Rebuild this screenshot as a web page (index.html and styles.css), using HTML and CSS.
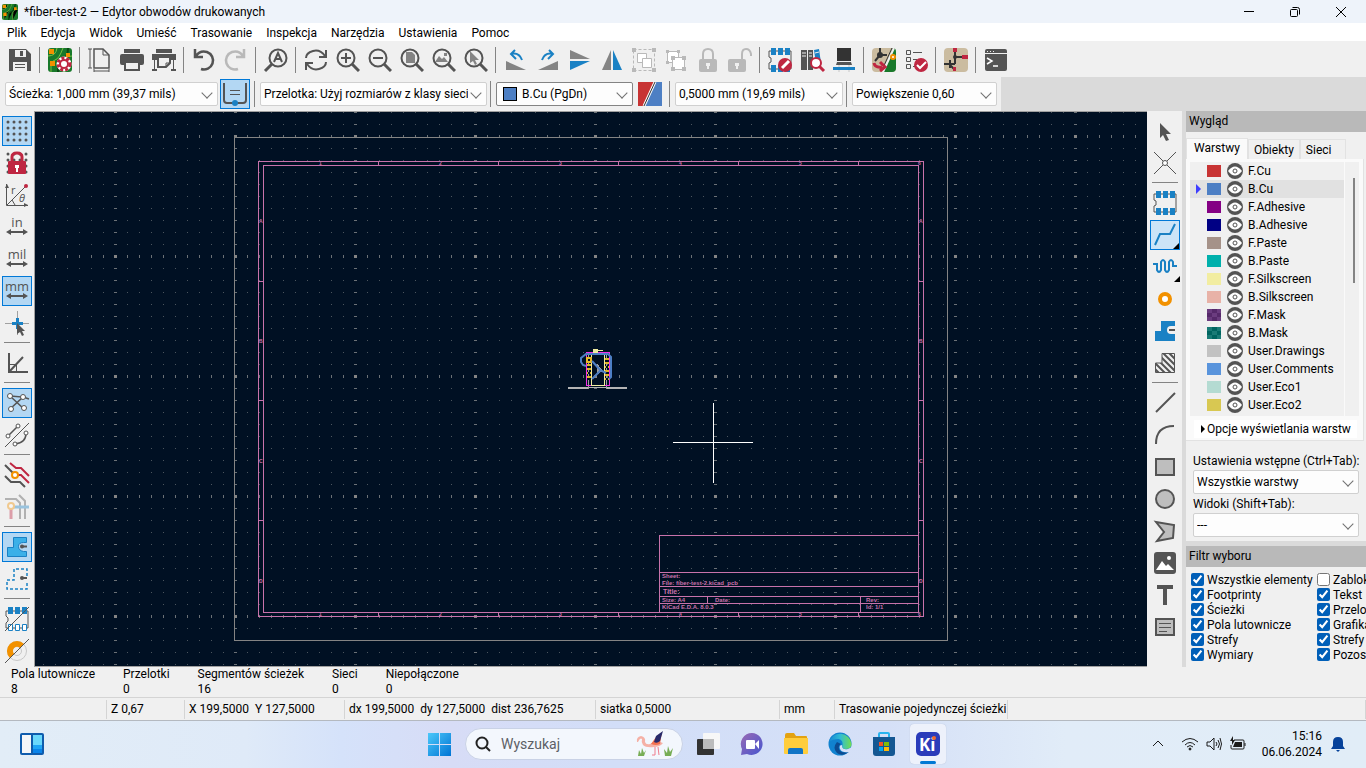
FILE: index.html
```html
<!DOCTYPE html>
<html lang="pl">
<head>
  <meta charset="UTF-8">
  <title>*fiber-test-2 — Edytor obwodów drukowanych</title>
  <meta name="viewport" content="width=device-width, initial-scale=1.0">
  <link rel="stylesheet" href="styles.css">
</head>
<body>
  <!-- shared symbols -->
  <svg class="defs" aria-hidden="true">
    <symbol id="lens" viewBox="0 0 24 24">
      <circle cx="10" cy="10" r="8.500"/><path d="M16 16l7 7" stroke-width="3"/>
    </symbol>
    <symbol id="footprint" viewBox="0 0 24 24">
      <path d="M1 3h22v18H1v-6l2-1v-4L1 9z" stroke-width="1"/>
      <path class="blue" d="M3 0h5v7H3zM10 0h5v7h-5zM17 0h5v7h-5zM3 17h5v7H3zM10 17h5v7h-5zM17 17h5v7h-5z"/>
    </symbol>
    <symbol id="eye" viewBox="0 0 16 16">
      <circle cx="8" cy="8" r="8" fill="#545454"/>
      <path d="M1 8q7-9 14 0q-7 9-14 0z" fill="#fff"/>
      <circle cx="8" cy="8" r="2" fill="#fff" stroke="#545454" stroke-width="1"/>
    </symbol>
    <symbol id="arrow" viewBox="0 0 24 24">
      <path class="dark" d="M7 4v15l3-3 3 6 3-1-3-6h5z"/>
    </symbol>
    <symbol id="kicad-board" viewBox="0 0 24 24">
      <rect class="green" width="24" height="24" rx="3"/>
      <path d="M0 8q8 0 9-8M3 24v-7q0-4 4-5t8-12M24 8q-8 0-8 8v8" stroke="#7bc043" stroke-width="1"/>
      <path d="M10 24v-8q0-3 5-5t5-11" stroke="#0d4b16" stroke-width="2"/>
      <path class="orange" d="M1 1h5v5H1zM2 13h5v5H2zM18 5h4v4h-4z"/>
    </symbol>
  </svg>

  <header class="titlebar">
    <svg class="app-icon"><use href="#kicad-board"/></svg>
    <span class="title">*fiber-test-2 — Edytor obwodów drukowanych</span>
    <button aria-label="Minimalizuj"><svg viewBox="0 0 12 12"><path d="M1 5.500h10"/></svg></button>
    <button aria-label="Przywróć"><svg viewBox="0 0 12 12"><rect x="1.500" y="3.500" width="7" height="7" rx="1"/><path d="M3.500 1.500h5q2 0 2 2v5"/></svg></button>
    <button aria-label="Zamknij"><svg viewBox="0 0 12 12"><path d="M1 1l10 10M11 1L1 11"/></svg></button>
  </header>

  <nav class="menubar">
    <button>Plik</button><button>Edycja</button><button>Widok</button><button>Umieść</button><button>Trasowanie</button><button>Inspekcja</button><button>Narzędzia</button><button>Ustawienia</button><button>Pomoc</button>
  </nav>

  <div class="toolbar">
    <button class="tool" aria-label="Zapisz"><svg viewBox="0 0 24 24"><path class="dark" d="M1 1h17l5 5v17H1z"/><path class="bg" d="M7 2h11v7H7zM5 14h14v9H5z"/><path class="dark" d="M12 3h3v5h-3zM7 16h10v1H7zM7 19h10v1H7z"/></svg></button>
    <i class="sep"></i>
    <button class="tool" aria-label="Ustawienia płytki"><svg viewBox="0 0 24 24"><use href="#kicad-board"/><circle cx="16" cy="16" r="5" stroke="#fff" stroke-width="5"/><circle cx="16" cy="16" r="6" stroke="#bf2641" stroke-width="3" stroke-dasharray="3 2"/><circle cx="16" cy="16" r="4" fill="#fff" stroke="#bf2641"/></svg></button>
    <i class="sep"></i>
    <button class="tool" aria-label="Ustawienia strony"><svg viewBox="0 0 24 24"><path d="M6 1h9l6 6v13H6z" stroke-width="1.500"/><path d="M15 1v6h6M2 1v19M0 1h4M0 20h4M6 23h15M6 21v3M21 21v3" stroke-width="1"/></svg></button>
    <button class="tool" aria-label="Drukuj"><svg viewBox="0 0 24 24"><path class="dark" d="M4 1h16v4H4zM0 8q0-2 2-2h20q2 0 2 2v7q0 2-2 2h-2v-4H4v4H2q-2 0-2-2z"/><path d="M5 14h14v8H5z" fill="#f0f0f0"/></svg></button>
    <button class="tool" aria-label="Rysuj"><svg viewBox="0 0 24 24"><path class="dark" d="M4 1h16v4H4zM0 6h24v6H0zM2 12h1v9H2zM21 12h1v9h-1zM0 21h5v2H0zM19 21h5v2h-5z"/><path d="M6 9h12v6l-4 4H6z" fill="#f0f0f0"/><path d="M14 19v-4h4" stroke-width="1"/></svg></button>
    <i class="sep"></i>
    <button class="tool" aria-label="Cofnij"><svg viewBox="0 0 24 24"><path d="M3 1v8h8M4 8q4-6 11-4a8.500 8.500 0 1 1-6 17" stroke-width="2.500"/></svg></button>
    <button class="tool" aria-label="Ponów" disabled><svg viewBox="0 0 24 24"><path d="M20 1v8h-8M19 8q-4-6-11-4a8.500 8.500 0 1 0 6 17" stroke="#b9b9b9" stroke-width="2.500"/></svg></button>
    <i class="sep"></i>
    <button class="tool" aria-label="Znajdź"><svg viewBox="0 0 24 24"><circle cx="14" cy="10" r="8.500"/><path d="M8 16l-7 7" stroke-width="3"/><path d="M10 14l4-9 4 9M11 11h6"/></svg></button>
    <i class="sep"></i>
    <button class="tool" aria-label="Odśwież"><svg viewBox="0 0 24 24"><path d="M22 2v7h-7M21 8Q16 1 9 3T2 10M2 22v-7h7M3 16q5 7 12 5t7-7"/></svg></button>
    <button class="tool" aria-label="Powiększ"><svg viewBox="0 0 24 24"><use href="#lens"/><path d="M10 5v10M5 10h10"/></svg></button>
    <button class="tool" aria-label="Pomniejsz"><svg viewBox="0 0 24 24"><use href="#lens"/><path d="M5 10h10"/></svg></button>
    <button class="tool" aria-label="Dopasuj stronę"><svg viewBox="0 0 24 24"><use href="#lens"/><path class="gray" d="M6 4h6l3 3v8H6z"/></svg></button>
    <button class="tool" aria-label="Dopasuj obiekty"><svg viewBox="0 0 24 24"><use href="#lens"/><path class="gray" d="M3 14l4-6 3 3 2-2 4 5zM12 5h3v3h-3z"/></svg></button>
    <button class="tool" aria-label="Powiększ zaznaczenie"><svg viewBox="0 0 24 24"><use href="#lens"/><path class="gray" d="M6 3v12l3-2 2 4 2-1-2-4h4z"/></svg></button>
    <i class="sep"></i>
    <button class="tool" aria-label="Obróć w lewo"><svg viewBox="0 0 24 24"><path class="gray" d="M2 13l20 9H2z"/><path class="blue-line" d="M11 2L7 6l5 5M7 6q8-2 11 6"/></svg></button>
    <button class="tool" aria-label="Obróć w prawo"><svg viewBox="0 0 24 24"><path class="gray" d="M22 13L2 22h20z"/><path class="blue-line" d="M13 2l4 4-5 5M17 6Q9 4 6 12"/></svg></button>
    <button class="tool" aria-label="Odbij w pionie"><svg viewBox="0 0 24 24"><path class="gray" d="M2 2l20 9H2z"/><path class="blue" d="M2 22l20-9H2z"/></svg></button>
    <button class="tool" aria-label="Odbij w poziomie"><svg viewBox="0 0 24 24"><path class="gray" d="M2 22l9-20v20z"/><path class="blue" d="M22 22L13 2v20z"/></svg></button>
    <button class="tool" aria-label="Grupuj" disabled><svg viewBox="0 0 24 24"><g class="off"><path d="M1.500 1.500h21v21h-21z" stroke-dasharray="3 2"/><path d="M5.500 5.500h9v9h-9z" fill="#fff"/><path d="M10.500 10.500h9v9h-9z" fill="#fff"/></g><path class="light" d="M0 0h4v4H0zM20 0h4v4h-4zM0 20h4v4H0zM20 20h4v4h-4z"/></svg></button>
    <button class="tool" aria-label="Rozgrupuj" disabled><svg viewBox="0 0 24 24"><g class="off"><path d="M3.500 3.500h11v11h-11z" fill="#fff"/><path d="M8.500 9.500h12v12h-12z" fill="#fff"/></g><path class="light" d="M2 2h3v3H2zM13 2h3v3h-3zM2 13h3v3H2zM7 8h4v4H7zM18 8h4v4h-4zM7 19h4v4H7zM18 19h4v4h-4z"/></svg></button>
    <button class="tool" aria-label="Zablokuj" disabled><svg viewBox="0 0 24 24"><rect class="light" x="3" y="11" width="18" height="13" rx="2"/><path d="M7 11V6q0-5 5-5t5 5v5" stroke="#b9b9b9"/><path class="bg" d="M10 15h4v3h-1v3h-2v-3h-1z"/></svg></button>
    <button class="tool" aria-label="Odblokuj" disabled><svg viewBox="0 0 24 24"><rect class="light" x="0" y="11" width="18" height="13" rx="2"/><path d="M14 11V6q0-5 4-5t5 5v2" stroke="#b9b9b9"/><path class="bg" d="M7 15h4v3h-1v3H8v-3H7z"/></svg></button>
    <i class="sep"></i>
    <button class="tool" aria-label="Edytor footprintów"><svg viewBox="0 0 24 24"><use href="#footprint"/><circle class="red" cx="17" cy="17" r="7"/><path d="M14 20l7-7" stroke="#fff" stroke-width="3"/></svg></button>
    <button class="tool" aria-label="Przeglądarka footprintów"><svg viewBox="0 0 24 24"><path class="dark" d="M1 2h6v20H1zM8 2h5v20H8z"/><path class="blue" d="M14 2l5-1 2 14-5 1z"/><path d="M2 5h4M2 8h4M9 5h3M9 8h3M15 5l4-1" stroke="#f0f0f0" stroke-width="1"/><circle cx="16" cy="15" r="5" fill="#fff" stroke="#bf2641"/><path d="M19 18l5 5" stroke="#bf2641" stroke-width="3"/></svg></button>
    <button class="tool" aria-label="Przeglądarka 3D"><svg viewBox="0 0 24 24"><path d="M7 17v7M17 17v7" stroke="#c8c8c8" stroke-width="1"/><path fill="#333" stroke="none" d="M5 0h14v13H5z"/><path class="dark" d="M5 14h14l1 3H4z"/><path class="blue" d="M1 19h22v3H1z"/></svg></button>
    <i class="sep"></i>
    <button class="tool" aria-label="Aktualizuj ze schematu"><svg viewBox="0 0 24 24"><rect fill="#cbbca0" stroke="none" width="24" height="24" rx="4"/><path class="green" d="M24 4v16q0 4-4 4h-9L21 0q3 0 3 4z"/><path d="M8 0v7M8 7l-5 6M8 7h7" stroke="#333"/><circle cx="8" cy="7" r="3" fill="#333" stroke="none"/><path d="M22 0L11 24" stroke="#f0f0f0" stroke-width="2"/><path d="M20 0L10 22" stroke="#333" stroke-width="1"/><circle cx="21" cy="9" r="2" fill="#fff" stroke="#f29100"/><path d="M2 15q1 5 8 4M8 14l5 5-5 4" stroke="#bf2641" stroke-width="3"/></svg></button>
    <button class="tool" aria-label="Kontrola DRC"><svg viewBox="0 0 24 24"><path d="M2.500 2.500h4v4h-4zM2.500 9.500h4v4h-4zM2.500 16.500h4v4h-4zM9 4.500h9M9 11.500h4M9 18.500h2" stroke-width="1"/><circle class="red" cx="17" cy="17" r="7"/><path d="M13 17l3 3 6-6" stroke="#fff"/></svg></button>
    <i class="sep"></i>
    <button class="tool" aria-label="Edytor schematów"><svg viewBox="0 0 24 24"><rect fill="#cbbca0" stroke="none" width="24" height="24" rx="4"/><path d="M11 3v6M11 9h8M11 9v7M0 16h11M6 12v8M6 17l5 5" stroke="#333"/><circle cx="11" cy="9" r="2" fill="#333" stroke="none"/><path class="red" d="M9 0h4v4H9zM18 7h6v4h-6zM9 19h3v4H9z"/></svg></button>
    <i class="sep"></i>
    <button class="tool" aria-label="Konsola"><svg viewBox="0 0 24 24"><rect class="dark" x="1" y="1" width="22" height="22" rx="2"/><path d="M1 5.500h22M3 3.500h1M6 3.500h1M9 3.500h1" stroke="#f0f0f0" stroke-width="1"/><path d="M3 10l5 3-5 3M9 18h5" stroke="#fff" stroke-width="1.500"/></svg></button>
  </div>

  <div class="toolbar-row">
    <div class="options-bar">
      <span class="select w-track"><select aria-label="Szerokość ścieżki"><option>Ścieżka: 1,000 mm (39,37 mils)</option></select></span>
      <button class="tool on" aria-label="Użyj szerokości ścieżki"><svg viewBox="0 0 24 24"><path d="M1 1v17q0 3 3 3h16q3 0 3-3V1"/><path d="M7 8.500h10M7 12.500h10" stroke-width="1"/><circle class="blue" cx="12" cy="21" r="3"/></svg></button>
      <i class="sep"></i>
      <span class="select w-via"><select aria-label="Przelotka"><option>Przelotka: Użyj rozmiarów z klasy sieci</option></select></span>
      <i class="sep"></i>
      <span class="select w-layer"><i class="chip"></i><select aria-label="Warstwa"><option>B.Cu (PgDn)</option></select></span>
      <button class="tool" aria-label="Para warstw"><svg viewBox="0 0 24 24"><path fill="#c83434" stroke="none" d="M0 0h24v24H0z"/><path fill="#4d7fc4" stroke="none" d="M17 0h7v24H6z"/><path d="M17 0L6 24" stroke="#fff" stroke-width="3"/><path d="M17 0L6 24" stroke="#333" stroke-width="1"/></svg></button>
      <i class="sep"></i>
      <span class="select w-grid"><select aria-label="Siatka"><option>0,5000 mm (19,69 mils)</option></select></span>
      <i class="sep"></i>
      <span class="select w-zoom"><select aria-label="Powiększenie"><option>Powiększenie 0,60</option></select></span>
    </div>
  </div>

  <main class="workspace">
    <div class="side-tools">
      <button class="tool on" aria-label="Siatka"><svg viewBox="0 0 24 24"><path class="dots" d="M3 3h19M3 9h19M3 15h19M3 21h19"/></svg></button>
      <button class="tool" aria-label="Blokada siatki"><svg viewBox="0 0 24 24"><path class="dots" d="M3 3h19M3 9h19M3 15h19M3 21h19"/><rect class="red" x="3" y="10" width="18" height="13" rx="1"/><path d="M7 10V6q0-4 5-4t5 4v4" stroke="#bf2641" stroke-width="3"/><path d="M10 14h4v3h-1v4h-2v-4h-1z" fill="#fff" stroke="none"/></svg></button>
      <button class="tool" aria-label="Współrzędne biegunowe"><svg viewBox="0 0 24 24"><path d="M1.500 1v21.500H23M2 22L21 3M7 17l3 5" stroke-width="1"/><path class="dark" d="M0 5l2-4 2 4zM19 20l4 2-4 2z"/><circle class="red" cx="21" cy="3" r="2"/><text x="6" y="11" class="glyph">r</text><text x="14" y="19" class="glyph theta">θ</text></svg></button>
      <button class="tool" aria-label="Cale"><svg viewBox="0 0 24 24"><text x="12" y="12" class="glyph unit">in</text><path d="M4 17h16"/><path class="dark" d="M6 14v6l-5-3zM18 14v6l5-3z"/></svg></button>
      <button class="tool" aria-label="Milsy"><svg viewBox="0 0 24 24"><text x="12" y="12" class="glyph unit">mil</text><path d="M4 17h16"/><path class="dark" d="M6 14v6l-5-3zM18 14v6l5-3z"/></svg></button>
      <button class="tool on" aria-label="Milimetry"><svg viewBox="0 0 24 24"><text x="12" y="12" class="glyph unit">mm</text><path d="M4 17h16"/><path class="dark" d="M6 14v6l-5-3zM18 14v6l5-3z"/></svg></button>
      <button class="tool" aria-label="Kursor"><svg viewBox="0 0 24 24"><path d="M0 12.500h24M12.500 0v24" stroke="#a0a0a0" stroke-width="1"/><path class="blue" d="M7 11h4V7h3v4h4v3h-4v4h-3v-4H7z"/><path class="dark" d="M12 12v11l3-2 2 4 2-1-2-4h3z"/></svg></button>
      <i class="sep"></i>
      <button class="tool" aria-label="Tryb kąta"><svg viewBox="0 0 24 24"><path d="M4 2v19h19M4 21L18 6"/><path d="M4 13.500h7.500V21" stroke-width="1"/></svg></button>
      <i class="sep"></i>
      <button class="tool on" aria-label="Linie połączeń"><svg viewBox="0 0 24 24"><path d="M5 5l14 13M5 18L18 6 5 5M18 6l6 2" stroke-width="1.500"/><g fill="#fff" stroke-width="1"><circle cx="5" cy="5" r="2.500"/><circle cx="18" cy="6" r="2.500"/><circle cx="6" cy="18" r="2.500"/><circle cx="19" cy="17" r="2.500"/></g></svg></button>
      <button class="tool" aria-label="Linie krzywe"><svg viewBox="0 0 24 24"><path d="M0 24L24 0" stroke-width="1"/><path d="M3 13L13 3M10 21q11-1 11-11" stroke-width="1.500"/><g fill="#fff" stroke-width="1"><circle cx="3" cy="13" r="2"/><circle cx="13" cy="3" r="2"/><circle cx="10" cy="21" r="2"/><circle cx="21" cy="10" r="2"/></g></svg></button>
      <i class="sep"></i>
      <button class="tool" aria-label="Podświetlanie sieci"><svg viewBox="0 0 24 24"><path d="M0 2l10 10M0 13l6 6h9l5 5"/><path d="M5 0l6 5h5l8 8M11 12h5l8 8" stroke="#bf2641"/><circle cx="10" cy="12" r="3" fill="#fff" stroke="#f29100"/></svg></button>
      <button class="tool" aria-label="Widok warstw"><svg viewBox="0 0 24 24" opacity=".4"><path d="M0 4h11l4 4v16M14 0l6 6v18" stroke-width="2"/><path d="M7 12h17" stroke="#1a81c4" stroke-width="3"/><path d="M6 13v11" stroke="#bf2641" stroke-width="3"/><circle cx="6" cy="11" r="3" fill="#fff" stroke="#f29100"/></svg></button>
      <i class="sep"></i>
      <button class="tool on" aria-label="Wypełnione strefy"><svg viewBox="0 0 24 24"><path d="M8.500 2.500h13v5h-3q-5 0-5 4t5 5h3v5h-19v-9h6z" fill="#3bb0e8" stroke="#1a81c4" stroke-width="1"/><path d="M16 11.500h6"/><circle class="dark" cx="17" cy="11.500" r="2"/></svg></button>
      <button class="tool" aria-label="Kontury stref"><svg viewBox="0 0 24 24"><path d="M22 9V2H9v11H2v9h20v-8" stroke="#1a81c4" stroke-dasharray="3 2" stroke-width="1.500"/><path d="M16 11h6"/><circle class="dark" cx="17" cy="11" r="2"/></svg></button>
      <i class="sep"></i>
      <button class="tool" aria-label="Szkic pól"><svg viewBox="0 0 24 24"><path d="M1 4h22v17H1v-5l2-2v-3L1 9z" stroke-width="1"/><path class="blue" d="M3 0h5v7H3zM10 0h5v7h-5zM17 0h5v7h-5z"/><path d="M3.500 17.500h4v6h-4zM10.500 17.500h4v6h-4zM17.500 17.500h4v6h-4z" fill="#fff" stroke="#1a81c4" stroke-width="1"/><path d="M0 24L24 0" stroke-width="1"/></svg></button>
      <button class="tool" aria-label="Szkic przelotek"><svg viewBox="0 0 24 24"><circle cx="12" cy="12" r="9.500" stroke="#c8c8c8" stroke-width="1"/><circle cx="12" cy="12" r="4.500" stroke="#c8c8c8" stroke-width="1"/><path d="M7 17A7 7 0 0 1 17 7" stroke="#f29100" stroke-width="6"/><path d="M0 24L24 0" stroke-width="1"/></svg></button>
    </div>

    <div class="canvas">
      <svg viewBox="35 112 1112 554" preserveAspectRatio="xMidYMid slice" shape-rendering="crispEdges">
        <defs>
          <pattern id="grid" x="115" y="136" width="12" height="12" patternUnits="userSpaceOnUse">
            <rect width="1" height="1" fill="#4b555e"/>
          </pattern>
          <pattern id="rows" x="115" y="135" width="12" height="120" patternUnits="userSpaceOnUse">
            <rect width="1" height="3" fill="#6b7176"/>
          </pattern>
          <pattern id="cols" x="114" y="136" width="120" height="12" patternUnits="userSpaceOnUse">
            <rect width="3" height="1" fill="#6b7176"/>
          </pattern>
          <pattern id="major" x="114" y="135" width="120" height="120" patternUnits="userSpaceOnUse">
            <rect width="3" height="3" fill="#848484"/>
          </pattern>
        </defs>
        <rect x="35" y="112" width="1112" height="554" fill="url(#grid)"/>
        <rect x="35" y="112" width="1112" height="554" fill="url(#rows)"/>
        <rect x="35" y="112" width="1112" height="554" fill="url(#cols)"/>
        <rect x="35" y="112" width="1112" height="554" fill="url(#major)"/>

        <!-- page and drawing sheet -->
        <rect class="page" x="234.500" y="137.500" width="713" height="503"/>
        <g class="sheet">
          <path d="M258.500 161.500h665v455h-665zM263.500 165.500h655v447h-655z"/>
          <path d="M378.500 161v4M498.500 161v4M618.500 161v4M738.500 161v4M858.500 161v4M378.500 612v4M498.500 612v4M618.500 612v4M738.500 612v4M858.500 612v4"/>
          <path d="M258 281.500h5M258 400.500h5M258 520.500h5M918 281.500h5M918 400.500h5M918 520.500h5"/>
          <path d="M659.500 612v-76.500h259M659 572.500h259M659 586.500h259M659 596.500h259M659 603.500h259M707.500 596v7M860.500 596v16"/>
        </g>
        <g class="sheet-text">
          <text x="319" y="165">1</text><text x="439" y="165">2</text><text x="559" y="165">3</text><text x="679" y="165">4</text><text x="799" y="165">5</text><text x="918" y="165">6</text>
          <text x="319" y="616">1</text><text x="439" y="616">2</text><text x="559" y="616">3</text><text x="679" y="616">4</text><text x="799" y="616">5</text><text x="918" y="616">6</text>
          <text x="259" y="223">A</text><text x="259" y="343">B</text><text x="259" y="463">C</text><text x="259" y="583">D</text>
          <text x="919" y="223">A</text><text x="919" y="343">B</text><text x="919" y="463">C</text><text x="919" y="583">D</text>
          <g class="block">
            <text x="662" y="578">Sheet:</text>
            <text x="662" y="585">File: fiber-test-2.kicad_pcb</text>
            <text x="663" y="594" class="big">Title:</text>
            <text x="662" y="602">Size: A4</text>
            <text x="715" y="602">Date:</text>
            <text x="866" y="602">Rev:</text>
            <text x="662" y="609">KiCad E.D.A. 8.0.3</text>
            <text x="866" y="609">Id: 1/1</text>
          </g>
        </g>

        <!-- the board -->
        <g fill="none">
          <path d="M568 387.500h20M606 387.500h21" stroke="#b4b4b4" stroke-width="2"/>
          <path d="M588 387.500h18" stroke="#b4b4b4" stroke-width="1"/>
          <path d="M588.500 354v35M606.500 354v35M597 364l5 7-5 3z" stroke="#a0a0a0" fill="#a0a0a0"/>
          <path d="M586.500 385.500v-33h23v33z" stroke="#f032e6"/>
          <path d="M591.500 354v31.500h13v-31.500M598 350.500h5" stroke="#f2eda1"/>
          <path d="M593 349h5v4h-5z" fill="#f2eda1"/>
          <path d="M589 364v16M607 358v22" stroke="#e0b428" stroke-width="4" stroke-dasharray="2 2"/>
          <path d="M589 366v14M607 360v20" stroke="#001023" stroke-width="2" stroke-dasharray="2 4"/>
          <path d="M586 357h6v6h-6z" fill="#e8b82a"/><path d="M588 359h2v2h-2z" fill="#001023"/>
          <g stroke="#4d7fc4" stroke-width="2" shape-rendering="auto">
            <path d="M586 366l-3-1-2-3v-4l5-4h22l3 3v20l-2 2"/>
            <path d="M592 361l8 9 6 3M600 371l-8 8"/>
          </g>
        </g>
        <path d="M713.500 403v80M673 442.500h80" stroke="#fff"/>
      </svg>
    </div>

    <div class="side-tools right">
      <button class="tool" aria-label="Zaznacz"><svg viewBox="0 0 24 24"><use href="#arrow"/></svg></button>
      <button class="tool" aria-label="Lokalne połączenia"><svg viewBox="0 0 24 24"><path d="M1 1l22 22M23 1L1 23" stroke-width="1"/><circle cx="12" cy="12" r="2.500" fill="#fff" stroke-width="1"/></svg></button>
      <i class="sep"></i>
      <button class="tool" aria-label="Dodaj footprint"><svg viewBox="0 0 24 24"><use href="#footprint"/></svg></button>
      <button class="tool pick more" aria-label="Trasuj ścieżki"><svg viewBox="0 0 24 24"><path class="blue-line" d="M2 22l5-11h10l5-10"/></svg></button>
      <button class="tool more" aria-label="Strojenie długości"><svg viewBox="0 0 24 24"><path class="blue-line" d="M0 9h4v6q2 4 4 0V7q2-4 4 0v8q2 4 4 0V7q2-4 4 0v4h4"/></svg></button>
      <button class="tool" aria-label="Dodaj przelotkę"><svg viewBox="0 0 24 24"><circle cx="12" cy="12" r="5" fill="#fff" stroke="#f29100" stroke-width="4"/></svg></button>
      <button class="tool" aria-label="Dodaj strefę"><svg viewBox="0 0 24 24"><path class="blue" d="M8 2h14v20H2V12h6z"/><path d="M22 7h-4q-4 0-4 4t4 4h4z" class="bg"/><path d="M16 11h6"/></svg></button>
      <button class="tool" aria-label="Obszar reguł"><svg viewBox="0 0 24 24"><clipPath id="zone"><path d="M9 2h13v20H2V12h7z"/></clipPath><path clip-path="url(#zone)" d="M0 10l14 14M0 16l8 8M5 9l15 15M8 6l16 16M8 0l16 16M14 0l10 10"/><path d="M9 2.500h12.500v19H2.500V12H9z" stroke-width="1"/></svg></button>
      <i class="sep"></i>
      <button class="tool" aria-label="Linia"><svg viewBox="0 0 24 24"><path d="M3 21L22 2"/></svg></button>
      <button class="tool" aria-label="Łuk"><svg viewBox="0 0 24 24"><path d="M3 21Q3 3 21 3"/></svg></button>
      <button class="tool" aria-label="Prostokąt"><svg viewBox="0 0 24 24"><path d="M3 4h18v16H3z" fill="#bebebe"/></svg></button>
      <button class="tool" aria-label="Okrąg"><svg viewBox="0 0 24 24"><circle cx="12" cy="12" r="9" fill="#bebebe"/></svg></button>
      <button class="tool" aria-label="Wielokąt"><svg viewBox="0 0 24 24"><path d="M3 3l18 3-1 13-16 3 7-9z" fill="#bebebe"/></svg></button>
      <button class="tool" aria-label="Obraz"><svg viewBox="0 0 24 24"><rect class="dark" x="1" y="1" width="22" height="22" rx="3"/><path d="M3 19l6-9 4 5 2-2 6 6z" fill="#fff" stroke="none"/><circle cx="16" cy="7" r="2" fill="#fff" stroke="none"/></svg></button>
      <button class="tool" aria-label="Tekst"><svg viewBox="0 0 24 24"><path class="dark" d="M4 2h16v4h-6v16h-4V6H4z"/></svg></button>
      <button class="tool" aria-label="Pole tekstowe"><svg viewBox="0 0 24 24"><path d="M3 4h18v16H3z" fill="#bebebe"/><path d="M6 8.500h12M6 12.500h12M6 16.500h8" stroke-width="1"/></svg></button>
    </div>

    <aside class="panels">
      <h2>Wygląd</h2>
      <div class="tabs">
        <button class="active">Warstwy</button><button>Obiekty</button><button>Sieci</button>
      </div>
      <div class="tab-page">
        <div class="layer-scroll">
          <ul class="layers">
            <li><i class="chip f-cu"></i><svg><use href="#eye"/></svg>F.Cu</li>
            <li class="current"><i class="chip b-cu"></i><svg><use href="#eye"/></svg>B.Cu</li>
            <li><i class="chip f-adh"></i><svg><use href="#eye"/></svg>F.Adhesive</li>
            <li><i class="chip b-adh"></i><svg><use href="#eye"/></svg>B.Adhesive</li>
            <li><i class="chip f-paste"></i><svg><use href="#eye"/></svg>F.Paste</li>
            <li><i class="chip b-paste"></i><svg><use href="#eye"/></svg>B.Paste</li>
            <li><i class="chip f-silk"></i><svg><use href="#eye"/></svg>F.Silkscreen</li>
            <li><i class="chip b-silk"></i><svg><use href="#eye"/></svg>B.Silkscreen</li>
            <li><i class="chip f-mask"></i><svg><use href="#eye"/></svg>F.Mask</li>
            <li><i class="chip b-mask"></i><svg><use href="#eye"/></svg>B.Mask</li>
            <li><i class="chip drawings"></i><svg><use href="#eye"/></svg>User.Drawings</li>
            <li><i class="chip comments"></i><svg><use href="#eye"/></svg>User.Comments</li>
            <li><i class="chip eco1"></i><svg><use href="#eye"/></svg>User.Eco1</li>
            <li><i class="chip eco2"></i><svg><use href="#eye"/></svg>User.Eco2</li>
          </ul>
          <i class="thumb"></i>
        </div>
        <button class="expander">Opcje wyświetlania warstw</button>
      </div>
      <div class="presets">
        <label for="preset">Ustawienia wstępne (Ctrl+Tab):</label>
        <span class="select"><select id="preset"><option>Wszystkie warstwy</option></select></span>
        <label for="views">Widoki (Shift+Tab):</label>
        <span class="select"><select id="views"><option>---</option></select></span>
      </div>
      <h2 class="filter-title">Filtr wyboru</h2>
      <div class="filters">
        <label><input type="checkbox" checked>Wszystkie elementy</label>
        <label><input type="checkbox">Zablokowane</label>
        <label><input type="checkbox" checked>Footprinty</label>
        <label><input type="checkbox" checked>Tekst</label>
        <label><input type="checkbox" checked>Ścieżki</label>
        <label><input type="checkbox" checked>Przelotki</label>
        <label><input type="checkbox" checked>Pola lutownicze</label>
        <label><input type="checkbox" checked>Grafika</label>
        <label><input type="checkbox" checked>Strefy</label>
        <label><input type="checkbox" checked>Strefy zabronione</label>
        <label><input type="checkbox" checked>Wymiary</label>
        <label><input type="checkbox" checked>Pozostałe</label>
      </div>
    </aside>
  </main>

  <dl class="messages">
    <div><dt>Pola lutownicze</dt><dd>8</dd></div>
    <div><dt>Przelotki</dt><dd>0</dd></div>
    <div><dt>Segmentów ścieżek</dt><dd>16</dd></div>
    <div><dt>Sieci</dt><dd>0</dd></div>
    <div><dt>Niepołączone</dt><dd>0</dd></div>
  </dl>

  <div class="statusbar">
    <span></span>
    <span>Z 0,67</span>
    <span>X 199,5000&nbsp; Y 127,5000</span>
    <span>dx 199,5000&nbsp; dy 127,5000&nbsp; dist 236,7625</span>
    <span>siatka 0,5000</span>
    <span>mm</span>
    <span>Trasowanie pojedynczej ścieżki</span>
    <span></span>
  </div>

  <footer class="taskbar">
    <div class="widgets">
      <button aria-label="Widżety"><svg viewBox="0 0 24 22"><rect width="24" height="22" rx="2" fill="#0f5cad"/><path d="M2 2h9v18H2z" fill="#f4f6f8"/><path d="M13 2h9v10h-9z" fill="#6ad8fb"/><path d="M13 12h9v4h-9z" fill="#1fa5f5"/><path d="M13 16h9v4h-9z" fill="#0a84ea"/></svg></button>
    </div>
    <div class="apps">
      <button class="start" aria-label="Start"><svg viewBox="0 0 24 24"><defs><linearGradient id="win" x2="1" y2="1"><stop stop-color="#4cc8fa"/><stop offset="1" stop-color="#0074d4"/></linearGradient></defs><path fill="url(#win)" d="M1 1h11v11H1zM13 1h11v11H13zM1 13h11v11H1zM13 13h11v11H13z"/></svg></button>
      <label class="search">
        <svg class="glass" viewBox="0 0 16 16"><circle cx="7" cy="7" r="5.500"/><path d="M11 11l4 4"/></svg>
        <input type="text" placeholder="Wyszukaj" aria-label="Wyszukaj">
        <svg class="flamingo" viewBox="0 0 38 26"><path d="M1 11q-1-5 4-6 5 1 4 6 1 3 5 2 6-4 13-1-3 4-9 4-8 1-11-2-2-3-1-6-2-2-4 3z" fill="#f5b1a6"/><path d="M15 13l5-7 6-5-2 12q-4 2-9 0z" fill="#f2704f"/><path d="M18 11l2-6 7-5-3 10q-3 3-6 1z" fill="#272a6b"/><path d="M19 16v8h-3M22 16l1 8" fill="none" stroke="#ef7d8c" stroke-width="1"/><path d="M2 25l1-6 2 4 1-6 2 5 2-3-2 6zM29 25l-1-7 3 4 1-7 2 6 3-4-2 8z" fill="#77ad55"/></svg>
      </label>
      <button aria-label="Widok zadań"><svg viewBox="0 0 24 24"><rect x="7" y="1" width="17" height="16" rx="1" fill="#f7f7f7"/><rect x="1" y="7" width="17" height="16" rx="1" fill="#333"/><path d="M7 7h11v10H7z" fill="#bcbcbc"/></svg></button>
      <button aria-label="Czat"><svg viewBox="0 0 24 24"><defs><linearGradient id="chat" x2="1" y2="1"><stop stop-color="#9a6ab4"/><stop offset="1" stop-color="#4655cf"/></linearGradient></defs><path d="M12 1a11 11 0 1 1-5 21l-6 1 1-6A11 11 0 0 1 12 1z" fill="url(#chat)"/><rect x="6" y="8" width="9" height="9" rx="1" fill="#fff"/><path d="M15 12l4-4v9z" fill="#fff"/></svg></button>
      <button aria-label="Eksplorator"><svg viewBox="0 0 24 24"><path d="M1 3q0-2 2-2h7l2 3h10q1 0 1 1v8H1z" fill="#e3a211"/><path d="M0 6h24v15q0 1-1 1H1q-1 0-1-1z" fill="#ffcd3c"/><path d="M4 22v-4q0-2 2-2h11q2 0 2 2v4z" fill="#1174c6"/></svg></button>
      <button aria-label="Edge"><svg viewBox="0 0 24 24"><defs><linearGradient id="edge" x2="1"><stop stop-color="#1686d2"/><stop offset=".5" stop-color="#30bcd5"/><stop offset="1" stop-color="#72dd4f"/></linearGradient></defs><circle cx="12" cy="12" r="11.500" fill="#1182cf"/><path d="M1 10A11.500 11.500 0 0 1 23.500 12q0 5-6 5-4 0-3-3 1-6-4-7-6 0-9.500 3z" fill="url(#edge)"/><path d="M9 10q-5 6 0 11 5 4 12-1-8 2-10-3-1-4 2-5z" fill="#0c4b91"/><path d="M14 15q1 3 6 2l4-2q-1 3-3 5-7 1-9-3-1-3 1-4 2 0 1 2z" fill="#d6e0f7"/></svg></button>
      <button aria-label="Sklep"><svg viewBox="0 0 24 24"><path d="M7 6V2q0-1 1-1h8q1 0 1 1v4" fill="none" stroke="#28b4ef" stroke-width="2"/><path d="M1 5h22v16q0 3-3 3H4q-3 0-3-3z" fill="#145792"/><path d="M7 10h4v4H7z" fill="#f35325"/><path d="M12 10h5v4h-5z" fill="#81bc06"/><path d="M7 15h4v4H7z" fill="#05a6f0"/><path d="M12 15h5v4h-5z" fill="#ffba08"/></svg></button>
      <button class="running" aria-label="KiCad"><svg viewBox="0 0 24 24"><rect width="24" height="24" rx="5" fill="#2b3cba"/><text x="3" y="19" class="ki">Ki</text><circle cx="18" cy="6" r="2" fill="#f26a2b"/></svg></button>
    </div>
    <div class="tray">
      <svg viewBox="0 0 16 16"><path d="M3 10l5-5 5 5"/></svg>
      <svg viewBox="0 0 16 16"><path d="M0 6q8-7 16 0M3 9q5-5 10 0M5 11q3-3 6 0" stroke-width="1"/><circle cx="8" cy="13" r="1" fill="#1b1b1b"/></svg>
      <svg viewBox="0 0 16 16"><path d="M1 6h3l4-4v12l-4-4H1zM10 6q2 2 0 4M12 4q3 4 0 8M14 2q3 6 0 12" stroke-width="1"/></svg>
      <svg viewBox="0 0 16 16"><path d="M4 4h9q1 0 1 1v7q0 1-1 1H2q-1 0-1-1V9M15 7v3" stroke-width="1"/><path d="M5 6h7v5H3zM3 0L0 5h2v4l3-5H3z" fill="#1b1b1b" stroke="none"/></svg>
      <time>15:16<br>06.06.2024</time>
      <svg class="bell" viewBox="0 0 16 16"><path d="M1 13l2-3V6q0-5 5-5t5 5v4l2 3zM6 14h4l-2 2z" fill="#06429a" stroke="none"/></svg>
    </div>
  </footer>
</body>
</html>
```
FILE: styles.css
```css
* { margin: 0; padding: 0; box-sizing: border-box; }
html, body {
  height: 100%;
}
body {
  display: flex;
  flex-direction: column;
  overflow: hidden;
  background: #f0f0f0;
  color: #000;
  font: 12px/16px Roboto, "Noto Sans", sans-serif;
}
button, input, select {
  font: inherit;
  color: inherit;
  border: 0;
  background: none;
}
.defs {
  position: absolute;
  width: 0;
  height: 0;
}

/* title and menu */
.titlebar {
  display: flex;
  flex: none;
  align-items: center;
  height: 23px;
  padding: 0 2px;
  background: #eef3fa;
}
.app-icon { width: 16px; height: 16px; }
.title { flex: 1; padding-left: 6px; }
.titlebar button {
  display: flex;
  justify-content: center;
  width: 46px;
}
.titlebar button svg {
  width: 12px;
  height: 12px;
  fill: none;
  stroke: #000;
}
.menubar {
  display: flex;
  flex: none;
  height: 18px;
  background: #fff;
}
.menubar button { padding: 1px 7px 0; }

/* icon buttons */
.toolbar {
  display: flex;
  flex: none;
  height: 36px;
  padding: 3px 4px 0;
}
.tool {
  position: relative;
  display: flex;
  flex: none;
  align-items: center;
  justify-content: center;
  width: 30px;
  height: 30px;
  margin: 1px;
}
.tool svg, .tool use {
  fill: none;
  stroke: #545454;
  stroke-width: 2;
}
.tool svg {
  flex: none;
  width: 24px;
  height: 24px;
  overflow: visible;
}
.tool .off { stroke: #b9b9b9; stroke-width: 1; }
.tool .dark, .defs .dark { fill: #545454; stroke: none; }
.tool .gray { fill: #848484; stroke: none; }
.tool .light { fill: #b9b9b9; stroke: none; }
.tool .bg { fill: #f0f0f0; stroke: none; }
.tool .red { fill: #bf2641; stroke: none; }
.blue { fill: #1a81c4; stroke: none; }
.green { fill: #19792b; stroke: none; }
.orange { fill: #f29100; stroke: none; }
.tool .blue-line { stroke: #1a81c4; }
.tool .dots {
  stroke-width: 3;
  stroke-linecap: round;
  stroke-dasharray: 0 6;
}
.tool.on {
  background: #b3d7f3;
  border: 1px solid #0078d7;
}
.tool.pick {
  background: #cce4f7;
  border: 1px solid #0078d7;
}
.tool.more::after {
  content: "";
  position: absolute;
  right: 0;
  bottom: 0;
  border: 3px solid #000;
  border-top-color: transparent;
  border-left-color: transparent;
}
.sep {
  flex: none;
  width: 1px;
  height: 26px;
  margin: 3px 4px 3px 3px;
  background: #848484;
}
.glyph {
  fill: #545454;
  stroke: none;
  font: 11px "Open Sans", sans-serif;
}
.theta { font-style: italic; }
.unit {
  font-size: 13px;
  text-anchor: middle;
}

/* combo boxes */
.toolbar-row {
  display: flex;
  flex: none;
  height: 34px;
  background: #dadada;
}
.options-bar {
  display: flex;
  align-items: center;
  padding: 0 4px 0 5px;
  background: #f0f0f0;
}
.select {
  position: relative;
  display: block;
  height: 24px;
  background: #fdfdfd;
  border: 1px solid #d0d0d0;
  border-radius: 2px;
}
.select select {
  appearance: none;
  display: block;
  width: 100%;
  height: 22px;
  padding: 0 18px 0 3px;
}
.select::after {
  content: "";
  position: absolute;
  top: 6px;
  right: 6px;
  width: 7px;
  height: 7px;
  border: solid #707070;
  border-width: 0 1px 1px 0;
  transform: rotate(45deg);
}
.w-track { width: 213px; margin-right: 1px; }
.w-via { width: 227px; margin-left: 1px; }
.w-layer { width: 137px; margin: 0 1px; border-color: #848484; }
.w-grid { width: 168px; margin-left: 1px; }
.w-zoom { width: 145px; margin-left: 1px; }
.w-layer select { padding-left: 25px; }
.w-layer .chip {
  position: absolute;
  top: 4px;
  left: 6px;
  width: 14px;
  height: 14px;
  background: #4d7fc4;
  border: 1px solid #000;
}

/* work area */
.workspace {
  display: flex;
  flex: 1;
  min-height: 0;
}
.side-tools {
  display: flex;
  flex: none;
  flex-direction: column;
  width: 34px;
  padding: 4px 1px 0;
  overflow: hidden;
}
.side-tools .sep {
  width: 26px;
  height: 1px;
  margin: 3px 3px 4px;
}
.side-tools.right {
  width: 35px;
  padding-left: 2px;
}
.canvas {
  flex: 1;
  min-width: 0;
  background: #001023;
  border: 1px solid #a0a0a0;
  border-right: 0;
}
.canvas svg {
  display: block;
  width: 100%;
  height: 100%;
}
.page { fill: none; stroke: #848484; }
.sheet { fill: none; stroke: #c872ab; }
.sheet-text {
  fill: #c872ab;
  font: bold 5px "Liberation Sans", sans-serif;
}
.block { font-size: 6px; }
.big { font-size: 7px; }

/* appearance panel */
.panels {
  display: flex;
  flex: none;
  flex-direction: column;
  width: 184px;
  border-left: 4px solid #dadada;
  overflow: hidden;
}
.panels h2 {
  flex: none;
  height: 21px;
  padding: 2px 3px;
  background: #b9b9b9;
  font: inherit;
}
.tabs {
  display: flex;
  align-items: flex-end;
  height: 27px;
  padding-top: 6px;
}
.tabs button {
  height: 20px;
  padding: 0 5px;
  border: 1px solid #e2e2e2;
  border-bottom: 0;
}
.tabs button:last-child { padding-right: 14px; }
.tabs .active {
  height: 21px;
  padding: 0 7px 3px;
  background: #fafafa;
}
.tab-page {
  margin-right: 2px;
  padding: 3px 4px 2px;
  background: #fafafa;
  border: 1px solid #e2e2e2;
  border-top: 0;
  border-left: 0;
}
.layer-scroll {
  display: flex;
  height: 254px;
  background: #f0f0f0;
}
.layers {
  width: 155px;
  list-style: none;
  border-right: 1px solid #fafafa;
}
.layers li {
  position: relative;
  display: flex;
  align-items: center;
  height: 18px;
  padding-left: 17px;
}
.layers svg {
  width: 16px;
  height: 16px;
  margin: 0 5px 0 6px;
}
.layers .chip { width: 14px; height: 12px; }
.layers .current { background: #e1e1e1; }
.layers .current::before {
  content: "";
  position: absolute;
  left: 6px;
  border: 5px solid transparent;
  border-left-color: #3d3dff;
  border-right: 0;
}
.f-cu { background: #c83434; }
.b-cu { background: #4d7fc4; }
.f-adh { background: #840084; }
.b-adh { background: #000084; }
.f-paste { background: #a59289; }
.b-paste { background: #00b0ac; }
.f-silk { background: #f2eda1; }
.b-silk { background: #e8b2a7; }
.f-mask { background: repeating-conic-gradient(#56296a 0 25%, #6b3c7f 0 50%) 0 0 / 10px 8px; }
.b-mask { background: repeating-conic-gradient(#006560 0 25%, #1a7b76 0 50%) 0 0 / 10px 8px; }
.drawings { background: #c2c2c2; }
.comments { background: #5994dc; }
.eco1 { background: #b4dbd2; }
.eco2 { background: #d8c852; }
.thumb {
  width: 2px;
  height: 105px;
  margin: 16px 0 0 8px;
  background: #848484;
}
.expander {
  display: flex;
  align-items: center;
  width: 163px;
  height: 18px;
  margin: 4px 0 0 4px;
  background: #fff;
  white-space: nowrap;
}
.expander::before {
  content: "";
  margin: 0 2px 0 7px;
  border: 4px solid transparent;
  border-left-color: #000;
  border-right: 0;
}
.presets {
  padding: 11px 7px 3px;
}
.presets label {
  display: block;
  height: 18px;
  padding-top: 1px;
  white-space: nowrap;
}
.presets .select { margin-bottom: 1px; }
.panels .filter-title {
  height: 26px;
  border-top: 5px solid #dadada;
}
.filters {
  display: grid;
  grid-template-columns: 126px 126px;
  grid-auto-rows: 15px;
  padding: 5px 5px 0;
}
.filters label {
  display: flex;
  align-items: center;
  white-space: nowrap;
}
.filters input {
  flex: none;
  width: 13px;
  height: 13px;
  margin-right: 3px;
  accent-color: #005fb8;
}

/* message panel and status bar */
.messages {
  display: flex;
  flex: none;
  gap: 28px;
  height: 30px;
  padding-left: 11px;
  line-height: 15px;
}
.statusbar {
  display: grid;
  flex: none;
  grid-template-columns: 107px 78px 160px 251px 184px 55px 173px 1fr;
  height: 24px;
  padding: 2px 0;
  border-top: 1px solid #d4d4d4;
  border-bottom: 1px solid #b4b9c0;
}
.statusbar span {
  padding: 0 4px;
  border-right: 1px solid #d4d4d4;
  line-height: 19px;
  white-space: nowrap;
}

/* system taskbar */
.taskbar {
  display: grid;
  flex: none;
  grid-template-columns: 1fr auto 1fr;
  height: 47px;
  padding-bottom: 1px;
  background: linear-gradient(90deg, #e2edf7 0%, #dfeaf8 18%, #d5e2fa 25%, #d7dcf6 33%, #d2def8 45%, #d5e0f7 65%, #e1ecf8 78%, #e1edf7 100%);
}
.taskbar button {
  display: flex;
  align-items: center;
  justify-content: center;
  width: 44px;
  height: 46px;
}
.taskbar button svg {
  width: 24px;
  height: 24px;
}
.widgets { padding-left: 10px; }
.apps {
  display: flex;
  align-items: center;
}
.taskbar .start { width: 46px; }
.search {
  display: flex;
  align-items: center;
  width: 218px;
  height: 32px;
  margin: 0 3px;
  padding: 0 8px 0 9px;
  background: #f3f7fd;
  border: 1px solid #c9d2e6;
  border-radius: 16px;
}
.search input {
  flex: 1;
  min-width: 0;
  padding-left: 10px;
  font-size: 14px;
}
.search input::placeholder { color: #5c5f66; opacity: 1; }
.glass {
  width: 16px;
  height: 16px;
  fill: none;
  stroke: #222;
  stroke-width: 2;
}
.flamingo { width: 38px; height: 26px; }
.taskbar .running {
  position: relative;
  height: 40px;
  width: 36px;
  margin: 0 4px;
  background: #edf1fb;
  border-radius: 4px;
  box-shadow: 0 0 1px #a9b4cc;
}
.running::after {
  content: "";
  position: absolute;
  bottom: 0;
  width: 16px;
  height: 3px;
  border-radius: 2px;
  background: #0078d4;
}
.ki {
  fill: #fff;
  font: bold 17px "Open Sans", sans-serif;
}
.tray {
  display: flex;
  align-items: center;
  justify-content: flex-end;
  gap: 8px;
  padding-right: 20px;
}
.tray svg {
  width: 16px;
  height: 16px;
  fill: none;
  stroke: #1b1b1b;
}
.tray svg:first-child { margin-right: 8px; }
.tray time {
  margin-left: 8px;
  text-align: right;
}
```
